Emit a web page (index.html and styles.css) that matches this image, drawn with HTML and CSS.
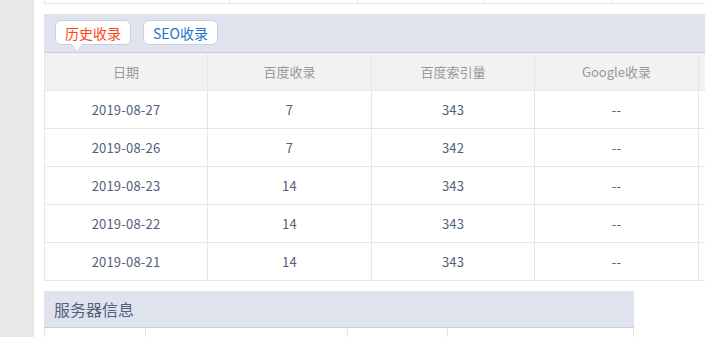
FILE: index.html
```html
<!DOCTYPE html>
<html lang="zh-CN">
<head>
<meta charset="utf-8">
<title>收录</title>
<link rel="stylesheet" href="styles.css">
</head>
<body>
<div class="layout">
  <aside class="sidebar"></aside>
  <main class="content">
    <div class="prev-table">
      <div class="pc c1"></div><div class="pc c2"></div><div class="pc c3"></div><div class="pc c4"></div><div class="pc c5"></div>
    </div>

    <section class="panel panel-wide">
      <div class="panel-head tabs">
        <button class="tab active">历史收录</button>
        <button class="tab">SEO收录</button>
      </div>
      <table class="grid">
        <colgroup><col class="w1"><col class="w2"><col class="w1"><col class="w2"><col class="w1"></colgroup>
        <thead>
          <tr><th>日期</th><th>百度收录</th><th>百度索引量</th><th>Google收录</th><th></th></tr>
        </thead>
        <tbody>
          <tr><td>2019-08-27</td><td>7</td><td>343</td><td>--</td><td></td></tr>
          <tr><td>2019-08-26</td><td>7</td><td>342</td><td>--</td><td></td></tr>
          <tr><td>2019-08-23</td><td>14</td><td>343</td><td>--</td><td></td></tr>
          <tr><td>2019-08-22</td><td>14</td><td>343</td><td>--</td><td></td></tr>
          <tr><td>2019-08-21</td><td>14</td><td>343</td><td>--</td><td></td></tr>
        </tbody>
      </table>
    </section>

    <section class="panel panel-narrow">
      <div class="panel-head title">服务器信息</div>
      <table class="grid info">
        <colgroup><col class="i1"><col class="i2"><col class="i3"><col></colgroup>
        <tbody>
          <tr><td></td><td></td><td></td><td></td></tr>
        </tbody>
      </table>
    </section>
  </main>
</div>
</body>
</html>
```

FILE: styles.css
```css
html, body {
  margin: 0;
  padding: 0;
  overflow: hidden;
  background: #fff;
}
body {
  font-family: "Noto Sans CJK SC", "Noto Sans", sans-serif;
  color: #52607a;
}
.layout {
  display: flex;
  height: 337px;
  overflow: hidden;
}
.sidebar {
  width: 34px;
  flex: none;
  background: #e8e8e8;
}
.content {
  padding-left: 10px;
  flex: none;
}
.prev-table {
  display: flex;
  height: 3px;
  border-bottom: 1px solid #e6e6e6;
  width: 818px;
}
.pc {
  border-left: 1px solid #e6e6e6;
}
.c1 { width: 184px; }
.c2 { width: 127px; }
.c3 { width: 125px; }
.c4 { width: 127px; }
.c5 { flex: 1; }

.panel {
  margin-top: 10px;
}
.panel-wide { width: 818px; }
.panel-narrow { width: 590px; }

.panel-head {
  background: #dfe3ee;
  border-bottom: 1px solid #c6cedf;
  box-sizing: border-box;
}
.tabs {
  height: 39px;
  display: flex;
  align-items: flex-start;
  gap: 12px;
  padding: 6px 0 0 11px;
}
.tab {
  position: relative;
  height: 25px;
  padding: 0 9px;
  background: #fff;
  border: 1px solid #c9d0e0;
  border-radius: 6px;
  font-family: inherit;
  font-size: 14px;
  font-weight: 400;
  line-height: 22px;
  color: #1f74c6;
  cursor: pointer;
}
.tab.active {
  color: #ff4514;
}
.tab.active::after {
  content: "";
  position: absolute;
  left: 16px;
  bottom: -6px;
  width: 0;
  height: 0;
  border-left: 5px solid transparent;
  border-right: 5px solid transparent;
  border-top: 6px solid #fff;
}

.grid {
  border-collapse: collapse;
  table-layout: fixed;
  width: 100%;
}
.w1 { width: 163px; }
.w2 { width: 164px; }
.grid th, .grid td {
  border: 1px solid #e6e6e6;
  border-top: none;
  height: 37px;
  padding: 0;
  text-align: center;
  font-size: 13px;
  font-weight: normal;
  white-space: nowrap;
}
.grid th {
  background: #f2f2f2;
  color: #999;
}
.grid td {
  color: #52607a;
  letter-spacing: 0.2px;
}

.title {
  height: 37px;
  font-size: 16px;
  line-height: 36px;
  padding-left: 10px;
  color: #52607a;
}
.i1 { width: 101px; }
.i2 { width: 202px; }
.i3 { width: 100px; }
```
